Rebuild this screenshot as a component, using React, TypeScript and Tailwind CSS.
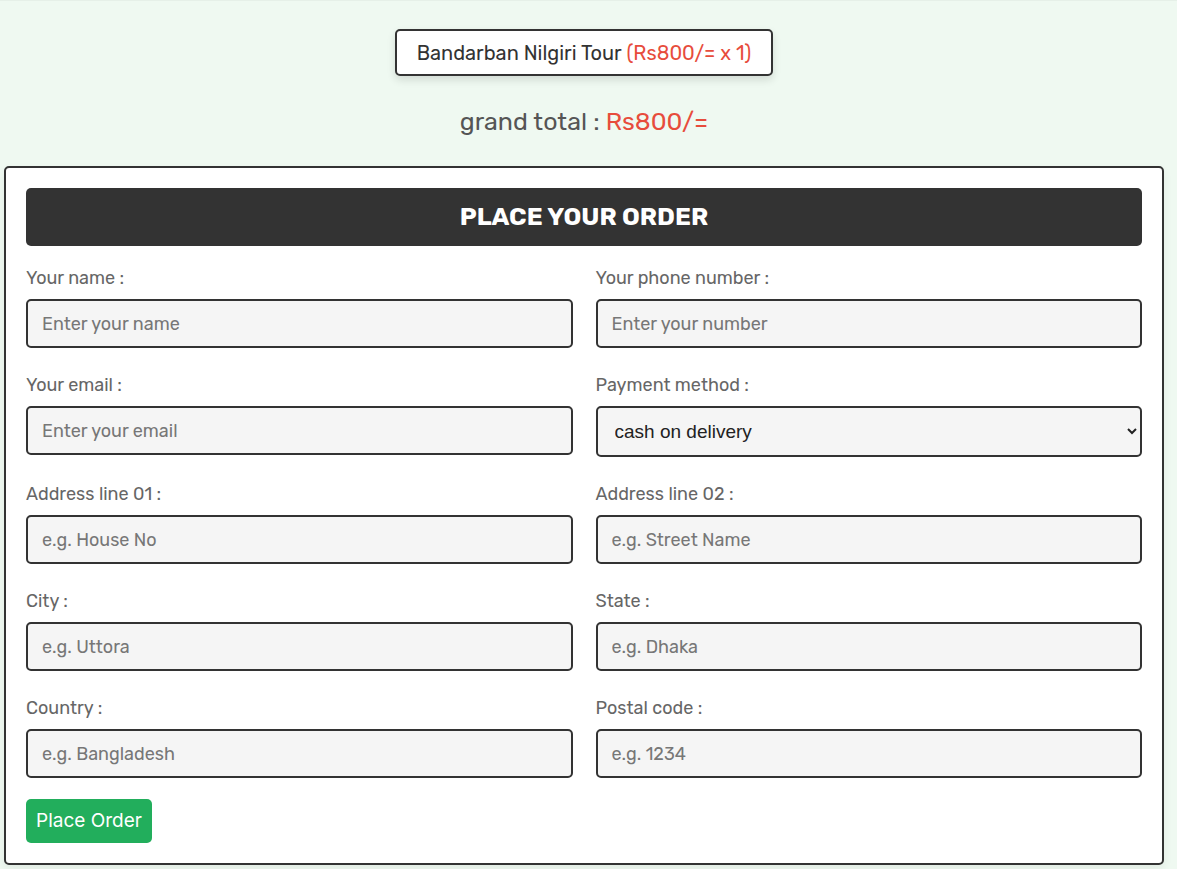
import React from 'react';

const fields: { label: string; placeholder?: string; select?: boolean }[] = [
  { label: 'Your name :', placeholder: 'Enter your name' },
  { label: 'Your phone number :', placeholder: 'Enter your number' },
  { label: 'Your email :', placeholder: 'Enter your email' },
  { label: 'Payment method :', select: true },
  { label: 'Address line 01 :', placeholder: 'e.g. House No' },
  { label: 'Address line 02 :', placeholder: 'e.g. Street Name' },
  { label: 'City :', placeholder: 'e.g. Uttora' },
  { label: 'State :', placeholder: 'e.g. Dhaka' },
  { label: 'Country :', placeholder: 'e.g. Bangladesh' },
  { label: 'Postal code :', placeholder: 'e.g. 1234' },
];

const App: React.FC = () => {
  return (
    <div className="min-h-screen bg-[#eff9f1] font-['Rubik','Noto_Sans',sans-serif] border-t border-[#e6f0e8]">
      <div className="ml-[4px] w-[1160px]">
        {/* Cart summary */}
        <div className="flex flex-col items-center pt-[28px]">
          <div className="bg-white border-2 border-[#333] rounded-[5px] shadow-[0_4px_8px_rgba(0,0,0,0.12)] px-[20px] h-[47px] flex items-center text-[20px] text-[#333]">
            Bandarban Nilgiri Tour&nbsp;<span className="text-[#e74c3c]">(Rs800/= x 1)</span>
          </div>
          <p className="mt-[28px] text-[25px] leading-[36px] text-[#555]">
            grand total : <span className="text-[#e74c3c]">Rs800/=</span>
          </p>
        </div>

        {/* Order form */}
        <div className="mt-[26px] bg-white border-2 border-[#333] rounded-[5px] p-[20px] shadow-[0_4px_10px_rgba(0,0,0,0.06)]">
          <h3 className="h-[58px] bg-[#333] rounded-[5px] text-white text-[25px] font-bold uppercase flex items-center justify-center">
            Place your order
          </h3>

          <div className="grid grid-cols-2 gap-x-[23px] gap-y-[23px] mt-[18px]">
            {fields.map((f) => (
              <div key={f.label} className="flex flex-col">
                <span className="text-[18px] leading-[28px] text-[#666] mb-[7px]">{f.label}</span>
                {f.select ? (
                  <select className="h-[51px] w-full bg-[#f5f5f5] border-2 border-[#333] rounded-[5px] pl-[13px] pr-[6px] text-[19px] text-[#222] font-['Liberation_Sans',Arial,sans-serif] outline-none">
                    <option>cash on delivery</option>
                    <option>credit card</option>
                  </select>
                ) : (
                  <input
                    type="text"
                    placeholder={f.placeholder}
                    className="h-[49px] w-full bg-[#f5f5f5] border-2 border-[#333] rounded-[5px] px-[14px] text-[18px] text-[#333] placeholder:text-[#777] outline-none"
                  />
                )}
              </div>
            ))}
          </div>

          <button className="mt-[21px] h-[44px] px-[10px] bg-[#22ae5c] rounded-[5px] text-white text-[19px] font-['Inter',sans-serif]">
            Place Order
          </button>
        </div>
      </div>
    </div>
  );
};

export default App;
